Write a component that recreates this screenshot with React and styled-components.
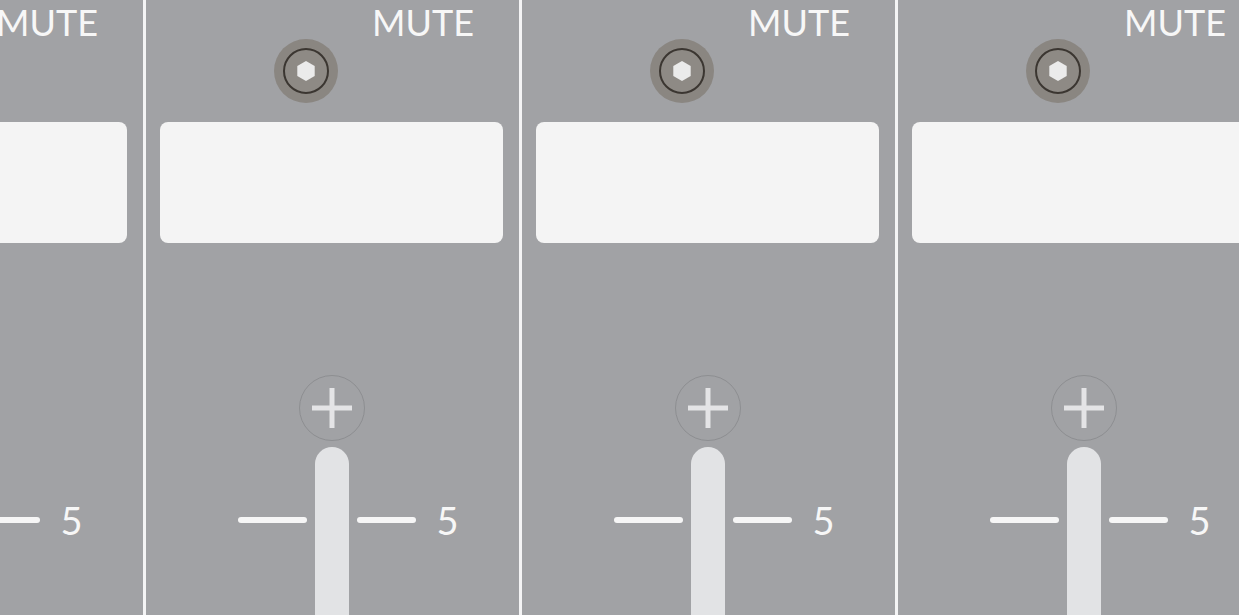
import React from "react";
import styled, { createGlobalStyle } from "styled-components";

const GlobalStyle = createGlobalStyle`
  html, body {
    margin: 0;
    padding: 0;
    background: #a1a2a5;
    overflow: hidden;
  }
`;

const channels = [1, 2, 3, 4];

const Knob = () => (
  <svg width="66" height="66" viewBox="0 0 66 66">
    <circle cx="33" cy="33" r="32" fill="#8a8681" />
    <circle cx="33" cy="33" r="22" fill="#8e8a85" stroke="#3b3631" strokeWidth="2" />
    <polygon
      points="33,23 41.7,28 41.7,38 33,43 24.3,38 24.3,28"
      fill="#ebebeb"
    />
  </svg>
);

const PlusIcon = () => (
  <svg width="66" height="66" viewBox="0 0 66 66">
    <circle cx="33" cy="33" r="32.5" fill="none" stroke="#8d8e91" strokeWidth="1" />
    <rect x="13" y="30.5" width="40" height="5" fill="#e4e4e6" />
    <rect x="30.5" y="13" width="5" height="40" fill="#e4e4e6" />
  </svg>
);

const Channel = () => (
  <Strip>
    <Header>
      <MuteLabel>MUTE</MuteLabel>
    </Header>
    <KnobRow>
      <Knob />
    </KnobRow>
    <Display />
    <Fader>
      <PlusButton>
        <PlusIcon />
      </PlusButton>
      <Track>
        <TickSide $left>
          <Tick $w={69} />
        </TickSide>
        <Bar />
        <TickSide>
          <Tick $w={59} />
          <Value>5</Value>
        </TickSide>
      </Track>
    </Fader>
  </Strip>
);

export default function App() {
  return (
    <>
      <GlobalStyle />
      <Board>
        {channels.map((c, i) => (
          <React.Fragment key={c}>
            {i > 0 && <Divider />}
            <Channel />
          </React.Fragment>
        ))}
      </Board>
    </>
  );
}

const Board = styled.div`
  display: flex;
  height: 615px;
  width: 1239px;
  overflow: hidden;
  background: #a1a2a5;
  font-family: "Lato", "Open Sans", sans-serif;
`;

const Divider = styled.div`
  flex: 0 0 3px;
  background: #f4f4f5;
`;

const Strip = styled.div`
  flex: 0 0 373px;
  display: flex;
  flex-direction: column;
  box-sizing: border-box;
  padding: 0 16px 0 14px;
  &:first-child {
    margin-left: -230px;
  }
`;

const Header = styled.div`
  display: flex;
  justify-content: flex-end;
  height: 38px;
  padding-right: 29px;
`;

const MuteLabel = styled.span`
  color: #f7f7f7;
  font-size: 36px;
  font-weight: 400;
  line-height: 44px;
`;

const KnobRow = styled.div`
  display: flex;
  padding-left: 113px;
  height: 66px;
`;

const Display = styled.div`
  margin-top: 18px;
  height: 121px;
  background: #f4f4f4;
  border-radius: 8px;
`;

const Fader = styled.div`
  margin-top: 132px;
  display: flex;
  flex-direction: column;
  align-items: center;
  flex: 1;
`;

const PlusButton = styled.div`
  width: 66px;
  height: 66px;
`;

const Track = styled.div`
  margin-top: 6px;
  display: grid;
  grid-template-columns: 1fr 34px 1fr;
  width: 100%;
  flex: 1;
`;

const TickSide = styled.div`
  display: flex;
  align-items: center;
  height: 40px;
  margin-top: 53px;
  justify-content: ${(p) => (p.$left ? "flex-end" : "flex-start")};
  padding: ${(p) => (p.$left ? "0 8px 0 0" : "0 0 0 8px")};
`;

const Tick = styled.div`
  width: ${(p) => p.$w}px;
  height: 6px;
  border-radius: 3px;
  background: #f6f6f6;
`;

const Value = styled.span`
  color: #f7f7f7;
  font-size: 38px;
  line-height: 40px;
  margin-left: 21px;
`;

const Bar = styled.div`
  background: #e2e3e5;
  border-radius: 17px 17px 0 0;
`;
